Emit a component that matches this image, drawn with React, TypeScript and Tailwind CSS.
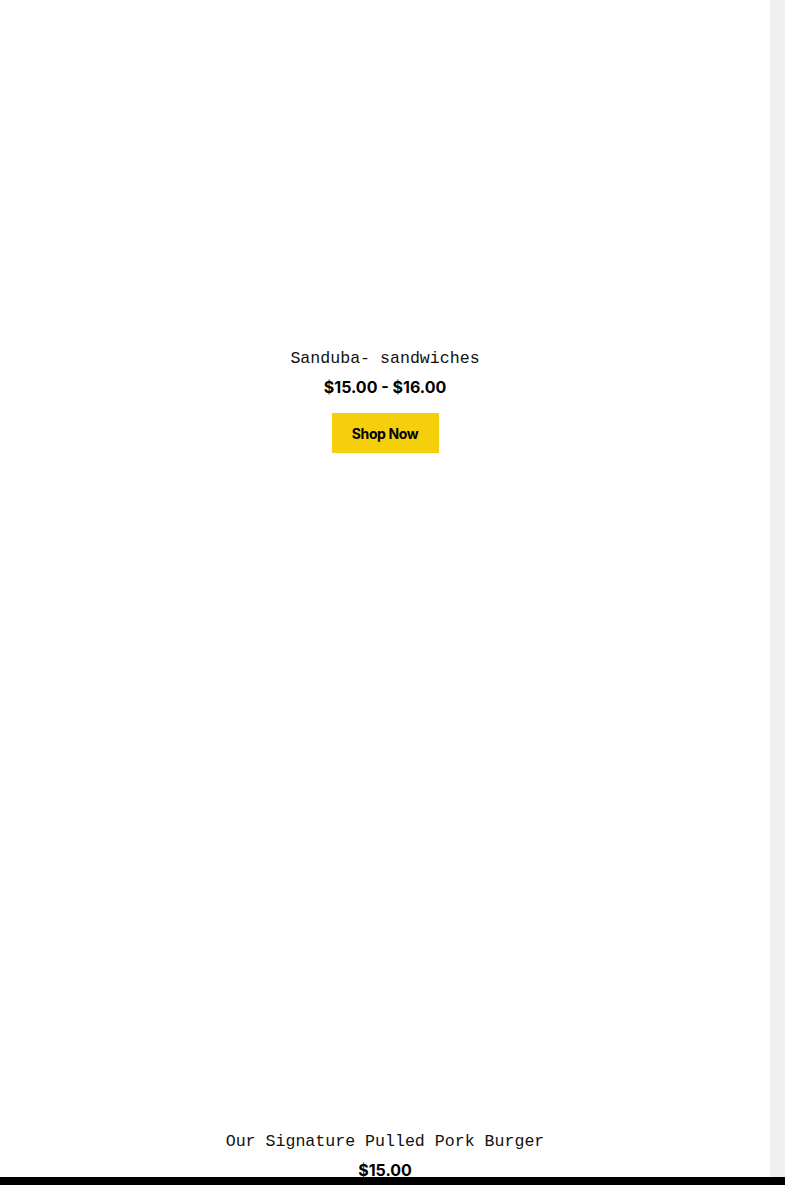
const products = [
  { name: "Sanduba- sandwiches", price: "$15.00 - $16.00", gapTop: "h-[348px]" },
  { name: "Our Signature Pulled Pork Burger", price: "$15.00", gapTop: "h-[678px]" },
];

function ProductCard({ name, price, gapTop, showButton }: { name: string; price: string; gapTop: string; showButton: boolean }) {
  return (
    <div className="flex flex-col items-center">
      {/* image area, blank in the capture */}
      <div className={`w-full ${gapTop}`} />
      <h3 className="font-['Liberation_Mono',monospace] text-[16.6px] leading-[22px] text-[#111]">{name}</h3>
      <p className="mt-[5px] font-['Inter',sans-serif] text-[16px] font-bold leading-[24px] text-black">
        {price}
      </p>
      {showButton && (
        <a
          href="#"
          className="mt-[14px] flex h-[40px] w-[107px] items-center justify-center bg-[#f5cf0b] font-['Inter',sans-serif] text-[14px] font-bold tracking-[-0.4px] text-black"
        >
          Shop Now
        </a>
      )}
    </div>
  );
}

export default function App() {
  return (
    <div className="relative flex h-screen w-full overflow-hidden bg-white">
      <main className="flex flex-1 flex-col">
        {products.map((p, i) => (
          <ProductCard key={p.name} {...p} showButton={i === 0} />
        ))}
      </main>
      <div className="w-[15px] shrink-0 bg-[#f0f0f0]" />
      <div className="absolute bottom-0 left-0 h-[8px] w-full bg-black" />
    </div>
  );
}
